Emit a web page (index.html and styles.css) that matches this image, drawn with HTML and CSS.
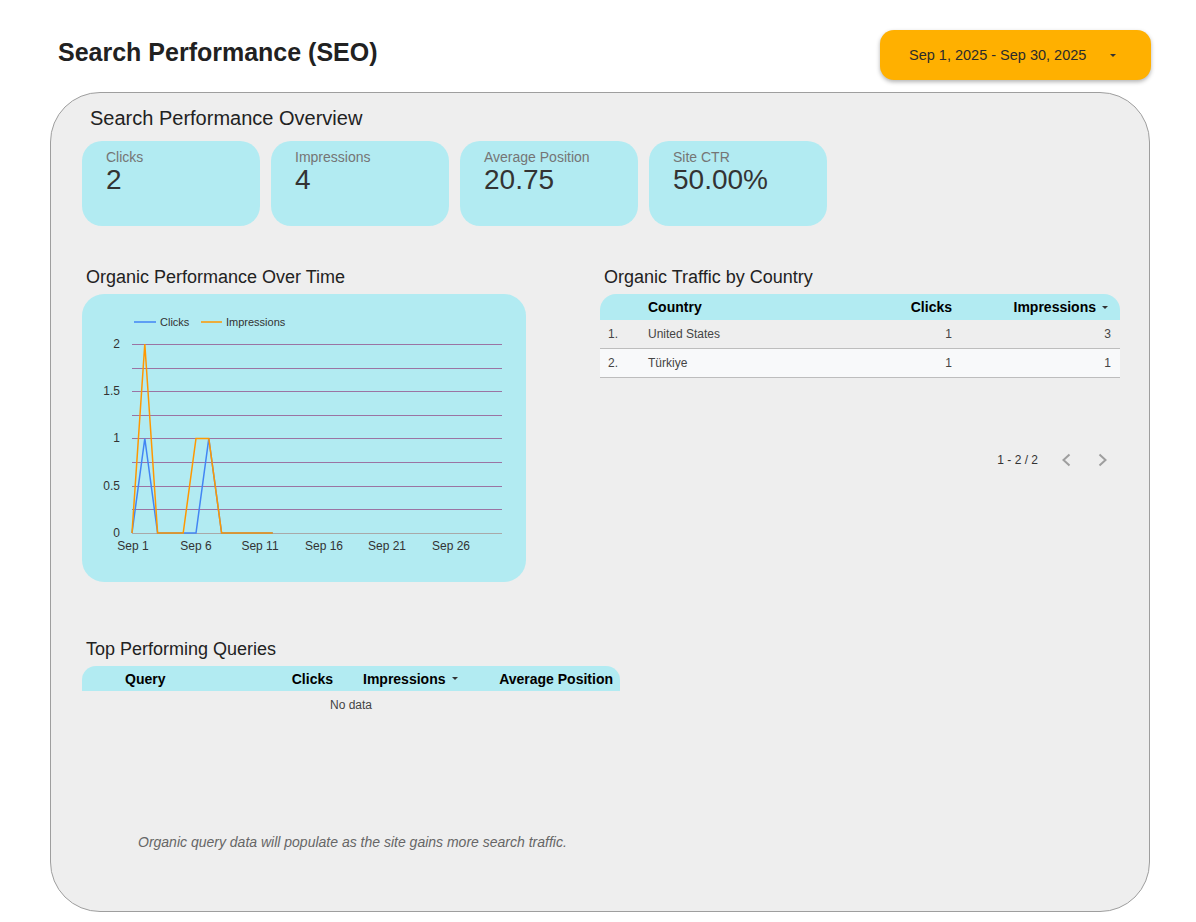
FILE: index.html
```html
<!DOCTYPE html>
<html>
<head>
<meta charset="utf-8">
<link rel="stylesheet" href="styles.css">
</head>
<body>
<div class="page">
  <header class="header">
    <h1 class="title">Search Performance (SEO)</h1>
    <div class="date-btn">
      <span>Sep 1, 2025 - Sep 30, 2025</span>
      <span class="caret"></span>
    </div>
  </header>

  <main class="panel">
    <h2 class="overview-title">Search Performance Overview</h2>
    <div class="kpis">
      <div class="kpi"><div class="kpi-label">Clicks</div><div class="kpi-value">2</div></div>
      <div class="kpi"><div class="kpi-label">Impressions</div><div class="kpi-value">4</div></div>
      <div class="kpi"><div class="kpi-label">Average Position</div><div class="kpi-value">20.75</div></div>
      <div class="kpi"><div class="kpi-label">Site CTR</div><div class="kpi-value">50.00%</div></div>
    </div>

    <div class="row">
      <section class="chart-section">
        <h3 class="section-title">Organic Performance Over Time</h3>
        <div class="chart-card">
          <svg width="444" height="288" viewBox="0 0 444 288" class="chart">
            <g font-family="Liberation Sans, Arial, sans-serif" font-size="11" fill="#333">
              <line x1="52" y1="28" x2="74" y2="28" stroke="#4285f4" stroke-width="1.5"/>
              <text x="78" y="32">Clicks</text>
              <line x1="119" y1="28" x2="140" y2="28" stroke="#ff9800" stroke-width="1.5"/>
              <text x="144" y="32">Impressions</text>
            </g>
            <g stroke="#9b74a3" stroke-width="1">
              <line x1="50" y1="50.5" x2="420" y2="50.5"/>
              <line x1="50" y1="74.5" x2="420" y2="74.5"/>
              <line x1="50" y1="97.5" x2="420" y2="97.5"/>
              <line x1="50" y1="121.5" x2="420" y2="121.5"/>
              <line x1="50" y1="144.5" x2="420" y2="144.5"/>
              <line x1="50" y1="168.5" x2="420" y2="168.5"/>
              <line x1="50" y1="192.5" x2="420" y2="192.5"/>
              <line x1="50" y1="215.5" x2="420" y2="215.5"/>
            </g>
            <line x1="50" y1="239.5" x2="420" y2="239.5" stroke="#a9a9a9" stroke-width="1"/>
            <g font-family="Liberation Sans, Arial, sans-serif" font-size="12" fill="#333" text-anchor="end">
              <text x="38" y="54">2</text>
              <text x="38" y="101">1.5</text>
              <text x="38" y="148">1</text>
              <text x="38" y="196">0.5</text>
              <text x="38" y="243">0</text>
            </g>
            <g font-family="Liberation Sans, Arial, sans-serif" font-size="12" fill="#333" text-anchor="middle">
              <text x="51" y="256">Sep 1</text>
              <text x="114" y="256">Sep 6</text>
              <text x="178" y="256">Sep 11</text>
              <text x="242" y="256">Sep 16</text>
              <text x="305" y="256">Sep 21</text>
              <text x="369" y="256">Sep 26</text>
            </g>
            <polyline fill="none" stroke="#4285f4" stroke-width="1.5" stroke-linejoin="miter"
              points="50,239 62.8,144.5 75.6,239 88.4,239 101.2,239 114,239 126.8,144.5 139.6,239 152.4,239 165.2,239 178,239 190.8,239"/>
            <polyline fill="none" stroke="#ff9800" stroke-width="1.5" stroke-linejoin="miter"
              points="50,239 62.8,50 75.6,239 88.4,239 101.2,239 114,144.5 126.8,144.5 139.6,239 152.4,239 165.2,239 178,239 190.8,239"/>
          </svg>
        </div>
      </section>

      <section class="country-section">
        <h3 class="section-title">Organic Traffic by Country</h3>
        <div class="ctable">
          <div class="crow chead">
            <div class="c-idx"></div>
            <div class="c-name">Country</div>
            <div class="c-num">Clicks</div>
            <div class="c-last c-sort">Impressions <span class="sort-caret"></span></div>
          </div>
          <div class="crow cbody odd">
            <div class="c-idx">1.</div>
            <div class="c-name">United States</div>
            <div class="c-num">1</div>
            <div class="c-last">3</div>
          </div>
          <div class="crow cbody even">
            <div class="c-idx">2.</div>
            <div class="c-name">Türkiye</div>
            <div class="c-num">1</div>
            <div class="c-last">1</div>
          </div>
        </div>
        <div class="pager">
          <span class="pager-text">1 - 2 / 2</span>
          <svg class="chev" width="24" height="24" viewBox="0 0 24 24"><path d="M15.5 6.5 L9.5 12 L15.5 17.5" fill="none" stroke="#9e9e9e" stroke-width="2"/></svg>
          <svg class="chev" width="24" height="24" viewBox="0 0 24 24"><path d="M8.5 6.5 L14.5 12 L8.5 17.5" fill="none" stroke="#9e9e9e" stroke-width="2"/></svg>
        </div>
      </section>
    </div>

    <section class="queries-section">
      <h3 class="section-title">Top Performing Queries</h3>
      <div class="qtable">
        <div class="qhead">
          <div class="q-query">Query</div>
          <div class="q-clicks">Clicks</div>
          <div class="q-impr">Impressions <span class="sort-caret"></span></div>
          <div class="q-avg">Average Position</div>
        </div>
        <div class="nodata">No data</div>
      </div>
    </section>

    <p class="note">Organic query data will populate as the site gains more search traffic.</p>
  </main>
</div>
</body>
</html>
```

FILE: styles.css
```css
* { box-sizing: border-box; }

html, body {
  margin: 0;
  padding: 0;
  background: #ffffff;
  font-family: "Liberation Sans", Arial, sans-serif;
  color: #222;
}

.page {
  width: 1196px;
  padding: 0 46px 0 50px;
}

.header {
  display: flex;
  justify-content: space-between;
  align-items: flex-start;
  height: 92px;
  padding-top: 30px;
}

.title {
  margin: 7px 0 0 8px;
  font-size: 25px;
  line-height: 30px;
  font-weight: bold;
  color: #212121;
}

.date-btn {
  width: 271px;
  height: 50px;
  margin-right: -1px;
  background: #ffb000;
  border-radius: 14px;
  box-shadow: 0 2px 4px rgba(0, 0, 0, 0.3);
  display: flex;
  align-items: center;
  padding-left: 29px;
  font-size: 14.5px;
  color: #2b2b2b;
}

.caret {
  width: 0;
  height: 0;
  margin-left: 24px;
  border-left: 3.5px solid transparent;
  border-right: 3.5px solid transparent;
  border-top: 3.5px solid #333;
}

.panel {
  width: 1100px;
  height: 820px;
  background: #eeeeee;
  border: 1px solid #9e9e9e;
  border-radius: 50px;
  padding: 13px 28px 0 31px;
}

.overview-title {
  margin: 0 0 11px 8px;
  font-size: 20px;
  line-height: 24px;
  font-weight: normal;
  color: #222;
}

.kpis {
  display: flex;
  gap: 11px;
}

.kpi {
  width: 178px;
  height: 85px;
  background: #b2ebf2;
  border-radius: 20px;
  padding: 8px 24px;
}

.kpi-label {
  font-size: 14px;
  line-height: 16px;
  color: #757575;
}

.kpi-value {
  font-size: 28px;
  line-height: 30px;
  color: #333;
}

.row {
  display: flex;
  gap: 74px;
  margin-top: 40px;
}

.section-title {
  margin: 0 0 6px 4px;
  font-size: 18px;
  line-height: 22px;
  font-weight: normal;
  color: #222;
}

.chart-section { width: 444px; }

.chart-card {
  width: 444px;
  height: 288px;
  background: #b2ebf2;
  border-radius: 22px;
}

.chart { display: block; }

.country-section { width: 520px; }

.ctable { width: 520px; }

.crow {
  display: grid;
  grid-template-columns: 48px 1fr 100px 168px;
  align-items: center;
}

.chead {
  height: 26px;
  background: #b2ebf2;
  border-radius: 16px 16px 0 0;
  font-size: 14px;
  font-weight: bold;
  color: #000;
}

.cbody {
  height: 29px;
  font-size: 12px;
  color: #444;
  border-bottom: 1px solid #bdbdbd;
}

.cbody.odd { background: #eeeeee; }
.cbody.even { background: #f8f9fa; }

.c-idx { padding-left: 8px; }
.c-num { text-align: right; }
.c-last { text-align: right; padding-right: 9px; }

.chead .c-last { padding-right: 12px; }

.c-sort {
  display: flex;
  justify-content: flex-end;
  align-items: center;
}

.sort-caret {
  display: inline-block;
  width: 0;
  height: 0;
  margin-left: 6px;
  border-left: 3px solid transparent;
  border-right: 3px solid transparent;
  border-top: 3px solid #333;
}

.pager {
  display: flex;
  justify-content: flex-end;
  align-items: center;
  margin-top: 70px;
  height: 24px;
  gap: 13px;
  padding-right: 5px;
  font-size: 12px;
  color: #333;
}

.pager-text { margin-right: 3px; }

.chev { display: block; }

.queries-section {
  margin-top: 56px;
  width: 538px;
}

.queries-section .section-title { margin-bottom: 6px; }

.qhead {
  display: flex;
  align-items: center;
  height: 25px;
  background: #b2ebf2;
  border-radius: 14px 14px 0 0;
  font-size: 14px;
  font-weight: bold;
  color: #000;
}

.q-query { width: 200px; padding-left: 43px; }
.q-clicks { width: 51px; text-align: right; }
.q-impr { margin-left: 30px; width: 136px; display: flex; align-items: center; }
.q-impr .sort-caret { margin-left: 7px; }
.q-avg { flex: 1; text-align: right; padding-right: 7px; }

.nodata {
  text-align: center;
  font-size: 12px;
  line-height: 14px;
  margin-top: 7px;
  color: #444;
}

.note {
  margin: 122px 0 0 56px;
  font-size: 14px;
  line-height: 16px;
  font-style: italic;
  color: #666;
}
```
